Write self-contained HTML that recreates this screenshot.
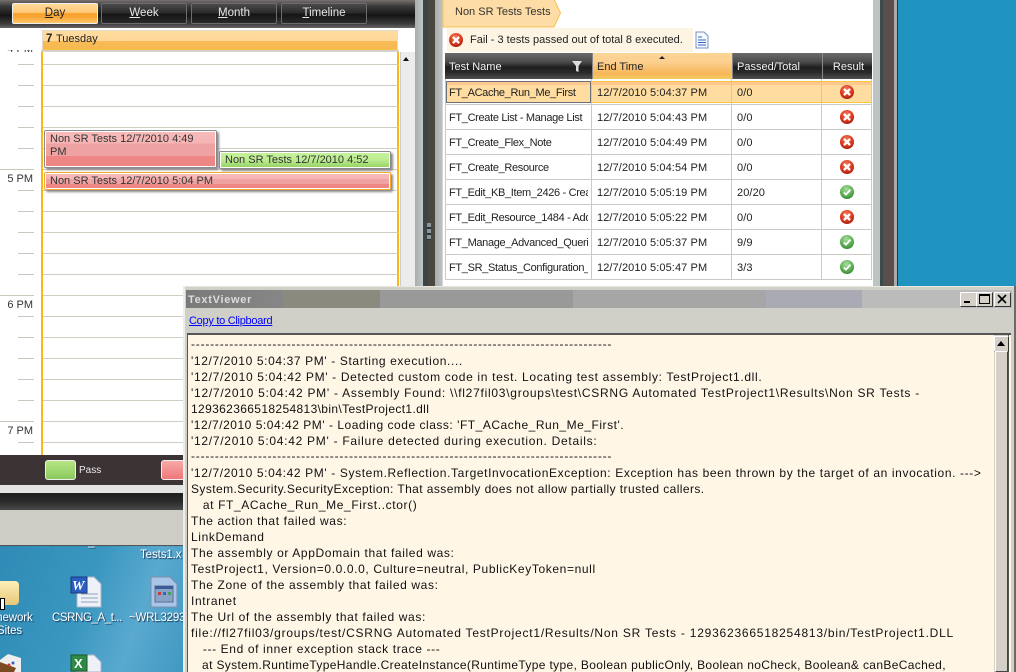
<!DOCTYPE html>
<html><head><meta charset="utf-8"><style>
html,body{margin:0;padding:0;background:#fff}
#p{position:relative;width:1016px;height:672px;overflow:hidden;font-family:"Liberation Sans",sans-serif;font-size:11px;color:#111;background:#2094c0}
.a{position:absolute}
.t{position:absolute;white-space:nowrap}
.btn{position:absolute;top:3px;height:19px;width:84px;border:1px solid #6d6d6d;border-radius:2px;color:#e8e8e8;text-align:center;line-height:19px;background:linear-gradient(#4a4a4a,#2c2c2c 45%,#151515 55%,#2a2a2a);font-size:11.5px}
.tick{position:absolute;left:18px;width:16px;height:1px;background:#c8c6bd}
.ln{position:absolute;left:43px;width:355px;height:1px;background:#cfcdc4}
.hl{position:absolute;left:0;width:34px;height:1px;background:#c8c6bd}
.hr{position:absolute;left:0;width:33px;text-align:right;font-size:11px;color:#333}
.ev{position:absolute;border:1px solid #8a8a8a;border-radius:2px;box-shadow:2px 2px 2px #888;font-size:11px;line-height:13px;padding:2px 0 0 5px;box-sizing:border-box;color:#333}
.red{background:linear-gradient(#f8baba 0,#f6b5b5 35%,#eea2a2 35%,#eea2a2 70%,#ee8686 70%);outline:1px solid #fff;outline-offset:-2px}
.th{position:absolute;top:53px;height:26px;background:linear-gradient(#6a6a6a,#4a4a4a 35%,#1e1e1e 55%,#2a2a2a 75%,#4e4e4e);color:#f2f2f2;font-size:11px;line-height:28px;padding-left:4px;box-sizing:border-box;border-left:1px solid #888}
.rl{position:absolute;left:446px;width:426px;height:1px;background:#c9c9c6}
.vl{position:absolute;top:79px;height:201px;width:1px;background:#c9c9c6}
.c{position:absolute;white-space:nowrap;overflow:hidden;font-size:11px;height:16px;line-height:16px;color:#222;letter-spacing:.1px}
.n{letter-spacing:-.33px}
.txt{position:absolute;left:191px;white-space:nowrap;font-size:12px;line-height:16px;height:16px;color:#111;letter-spacing:.62px}
.wb{position:absolute;top:292px;width:15px;height:13px;background:#d4d0c8;border:1px solid;border-color:#fff #333 #333 #fff}
.d{position:absolute;color:#fff;font-size:11.5px;letter-spacing:-.1px;text-shadow:1px 1px 1px #135;white-space:nowrap}
</style></head><body><div id="p">

<svg width="0" height="0" style="position:absolute"><defs>
<radialGradient id="rg" cx=".45" cy=".3" r=".8"><stop offset="0" stop-color="#f47a5a"/><stop offset=".6" stop-color="#d8341a"/><stop offset="1" stop-color="#8e1a10"/></radialGradient>
<radialGradient id="gg" cx=".45" cy=".3" r=".8"><stop offset="0" stop-color="#a8dca0"/><stop offset=".6" stop-color="#5aac50"/><stop offset="1" stop-color="#2d7a2d"/></radialGradient>
<g id="xi"><circle cx="7" cy="7" r="7" fill="url(#rg)"/><path d="M4.6 4.6L9.4 9.4M9.4 4.6L4.6 9.4" stroke="#fff" stroke-width="2.4" stroke-linecap="round"/></g>
<g id="ok"><circle cx="7" cy="7" r="7" fill="url(#gg)"/><path d="M3.8 7.5L6 9.6L10.4 4.6" stroke="#fff" stroke-width="1.8" fill="none"/></g>
</defs></svg>

<!-- desktop -->
<div class="a" style="left:0;top:545px;width:190px;height:127px;background:linear-gradient(110deg,#2f8bb5,#3a97c0 45%,#5aa9cf 70%,#3d97c0)"></div>

<!-- left app -->
<div class="a" style="left:0;top:0;width:415px;height:455px;background:#fff"></div>
<div class="a" style="left:0;top:0;width:415px;height:28px;background:linear-gradient(#77706f,#3a3a3a 22%,#141414 55%,#3c3c3c 85%,#666)"></div>
<div class="a" style="left:415px;top:0;width:8px;height:290px;background:linear-gradient(90deg,#a8acac,#c0c6c6)"></div>
<div class="btn" style="left:12px;color:#222;border-color:#eee;background:linear-gradient(#ffd898,#ffc878 45%,#f8a028 50%,#f8a838 70%,#ffc868)"><u>D</u>ay</div>
<div class="btn" style="left:101px"><u>W</u>eek</div>
<div class="btn" style="left:191px"><u>M</u>onth</div>
<div class="btn" style="left:281px"><u>T</u>imeline</div>

<div class="a" style="left:42px;top:30px;width:356px;height:20px;background:linear-gradient(#ffdca0,#ffd898 55%,#f8bc58 55%,#f8b850);border:1px solid #e0ddd0;box-sizing:border-box;border-bottom:1px solid #f8c040"></div>
<div class="a" style="left:41px;top:50px;width:358px;height:2px;background:#d4d2ca"></div>
<div class="t" style="left:46px;top:33px;font-size:11.5px;color:#222;font-weight:bold">7</div>
<div class="t" style="left:56px;top:33px;font-size:11px;color:#222">Tuesday</div>

<div class="a" style="left:41px;top:52px;width:2px;height:403px;background:#f8b818"></div>
<div class="a" style="left:397px;top:52px;width:2px;height:403px;background:#f8b818"></div>
<!-- lines -->
<div class="ln" style="top:64px"></div><div class="ln" style="top:85px"></div><div class="ln" style="top:106px"></div><div class="ln" style="top:127px"></div><div class="ln" style="top:148px"></div><div class="ln" style="top:169px"></div><div class="ln" style="top:190px"></div><div class="ln" style="top:211px"></div><div class="ln" style="top:232px"></div><div class="ln" style="top:253px"></div><div class="ln" style="top:274px"></div><div class="ln" style="top:295px"></div><div class="ln" style="top:316px"></div><div class="ln" style="top:337px"></div><div class="ln" style="top:358px"></div><div class="ln" style="top:379px"></div><div class="ln" style="top:400px"></div><div class="ln" style="top:421px"></div><div class="ln" style="top:442px"></div>
<div class="tick" style="top:64px"></div><div class="tick" style="top:85px"></div><div class="tick" style="top:106px"></div><div class="tick" style="top:127px"></div><div class="tick" style="top:148px"></div><div class="hl" style="top:169px"></div><div class="tick" style="top:190px"></div><div class="tick" style="top:211px"></div><div class="tick" style="top:232px"></div><div class="tick" style="top:253px"></div><div class="tick" style="top:274px"></div><div class="hl" style="top:295px"></div><div class="tick" style="top:316px"></div><div class="tick" style="top:337px"></div><div class="tick" style="top:358px"></div><div class="tick" style="top:379px"></div><div class="tick" style="top:400px"></div><div class="hl" style="top:421px"></div><div class="tick" style="top:442px"></div>
<div class="hr" style="top:173px">5 PM</div>
<div class="hr" style="top:299px">6 PM</div>
<div class="hr" style="top:425px">7 PM</div>
<div class="a" style="left:0;top:50px;width:34px;height:6px;overflow:hidden"><div class="t" style="right:1px;top:-7px;font-size:11px;color:#333">4 PM</div></div>

<div class="ev red" style="left:44px;top:130px;width:173px;height:38px">Non SR Tests 12/7/2010 4:49<br>PM</div>
<div class="ev" style="left:219px;top:151px;width:172px;height:18px;padding-left:5px;background:linear-gradient(#c6f49c,#bcec90 50%,#92d060);outline:1px solid #fff;outline-offset:-2px">Non SR Tests 12/7/2010 4:52</div>
<div class="ev red" style="left:44px;top:172px;width:347px;height:18px;border:2px solid #f4a830;padding:1px 0 0 4px">Non SR Tests 12/7/2010 5:04 PM</div>

<!-- scrollbar -->
<div class="a" style="left:400px;top:52px;width:15px;height:403px;background:#ececec;border-left:1px solid #ccc;box-sizing:border-box"></div>
<div class="a" style="left:403px;top:57px;width:0;height:0;border:3.5px solid transparent;border-bottom:4px solid #111;border-top:0"></div>

<!-- bottom bar -->
<div class="a" style="left:0;top:455px;width:190px;height:30px;background:#3c3335"></div>
<div class="a" style="left:45px;top:460px;width:31px;height:20px;border:1px solid #eee;border-radius:3px;box-sizing:border-box;background:linear-gradient(#b6e484,#a0d870 50%,#88c85c)"></div>
<div class="t" style="left:79px;top:465px;color:#e8e8e8;font-size:10px">Pass</div>
<div class="a" style="left:161px;top:460px;width:25px;height:20px;border:1px solid #eee;border-radius:3px;box-sizing:border-box;background:linear-gradient(#f8a8a8,#ee7878)"></div>
<div class="a" style="left:0;top:485px;width:190px;height:8px;background:#e4e4e2"></div>
<div class="a" style="left:0;top:493px;width:190px;height:17px;background:linear-gradient(#1f1f1f,#2a2a2a 50%,#4a4a4a)"></div>
<div class="a" style="left:0;top:510px;width:190px;height:35px;background:#cdccc5"></div>

<!-- desktop icons -->
<div class="a" style="left:0;top:581px;width:19px;height:24px;background:linear-gradient(#fdeeb8,#e8c878);border-radius:0 4px 4px 0"></div>
<div class="a" style="left:0;top:598px;width:3px;height:10px;background:#fff;border:1px solid #000"></div>
<svg class="a" style="left:70px;top:576px" width="32" height="32"><path d="M7 1H24L31 8V31H7Z" fill="#eef2f8" stroke="#a8b4c8"/><path d="M11 18H28M11 22H28M11 26H28" stroke="#8fa0bd"/><rect x="1" y="1" width="16" height="16" fill="#2a5fc0" stroke="#1a3a80"/><text x="2" y="14" font-family="Liberation Serif" font-weight="bold" font-style="italic" font-size="14" fill="#fff">W</text></svg>
<svg class="a" style="left:150px;top:576px" width="28" height="32"><path d="M1 1H20L27 8V31H1Z" fill="#a8c4e6" stroke="#7a90b0"/><rect x="5" y="10" width="18" height="16" fill="#8aa4c8" stroke="#5a7090"/><rect x="5" y="10" width="18" height="3" fill="#3a5a98"/><rect x="8" y="16" width="3" height="3" fill="#c04040"/><rect x="13" y="16" width="3" height="3" fill="#4060c0"/><rect x="18" y="16" width="3" height="3" fill="#40a060"/></svg>
<svg class="a" style="left:70px;top:654px" width="32" height="18"><path d="M7 1H24L31 8V18H7Z" fill="#eef2f8" stroke="#a8b4c8"/><rect x="1" y="1" width="16" height="16" fill="#2e8a44" stroke="#1a5a2a"/><text x="4" y="14" font-family="Liberation Sans" font-weight="bold" font-size="13" fill="#fff">X</text></svg>
<svg class="a" style="left:0;top:654px" width="22" height="18"><path d="M8 0L21 4V18H0V6Z" fill="#eee"/><path d="M0 8L16 14L14 18H0Z" fill="#7a4a20"/><circle cx="9" cy="11" r="1.5" fill="#d03030"/><circle cx="13" cy="9" r="1.5" fill="#3060c0"/></svg>
<div class="d" style="left:-7px;top:612px">mework</div>
<div class="d" style="left:-3px;top:625px">Sites</div>
<div class="d" style="left:52px;top:612px;letter-spacing:-.4px">CSRNG_A_t...</div>
<div class="d" style="left:129px;top:612px;letter-spacing:-.2px">~WRL3293</div>
<div class="d" style="left:140px;top:549px">Tests1.x</div>
<div class="a" style="left:0;top:545px;width:190px;height:4px;overflow:hidden"><div class="d" style="left:48px;top:-9px">browser_com...</div><div class="d" style="left:132px;top:-9px">~NRTesthe</div><div class="d" style="left:0;top:-9px">tech</div></div>
<div class="a" style="left:0;top:545px;width:190px;height:1px;background:#555"></div>

<!-- right app -->
<div class="a" style="left:423px;top:0;width:20px;height:290px;background:linear-gradient(90deg,#3a4545 0,#3a4545 5px,#4a483e 5px,#4a483e 12px,#a8acac 12px,#bcc0c0 19px,#eee 20px)"></div>
<div class="a" style="left:443px;top:0;width:430px;height:290px;background:#fff"></div>
<div class="a" style="left:873px;top:0;width:25px;height:290px;background:linear-gradient(90deg,#bcc4c4 0,#bcc4c4 7px,#3c4a4a 7px,#3c4a4a 10px,#5a4e4c 10px,#5a4e4c 21px,#aaa 21px,#aaa 24px,#333 24px)"></div>
<div class="a" style="left:898px;top:0;width:118px;height:290px;background:#2094c0"></div>
<div class="a" style="left:427px;top:223px;width:4px;height:17px;background:repeating-linear-gradient(#88959a 0,#88959a 4px,#333 4px,#333 6px)"></div>

<svg class="a" style="left:442px;top:0" width="119" height="28"><path d="M1 -1V27H112L118.500 13L112 -1Z" fill="#fddca6" stroke="#f8c050"/></svg>
<div class="t" style="left:455px;top:6px;color:#333">Non SR Tests Tests</div>
<div class="a" style="left:447px;top:28px;width:246px;height:24px;background:#fdf4e4"></div>
<svg class="a" style="left:449px;top:33px" width="15" height="15"><use href="#xi"/></svg>
<div class="t" style="left:470px;top:34px;color:#222">Fail - 3 tests passed out of total 8 executed.</div>
<svg class="a" style="left:695px;top:31px" width="14" height="18"><path d="M1 1H9L13 5V17H1Z" fill="#f4f8ff" stroke="#7a90b8"/><path d="M3 6H7M3 9H11M3 11.500H11M3 14H11" stroke="#3a64c0"/></svg>

<div class="th" style="left:445px;width:147px;border-left:0">Test Name</div>
<svg class="a" style="left:571px;top:60px" width="12" height="13"><path d="M1 1H11L7.500 6V12L5 11V6Z" fill="#ddd"/></svg>
<div class="th" style="left:592px;width:140px;color:#222;background:linear-gradient(#fcd494,#fcd090 35%,#f8c070 60%,#f8b858 80%,#f4cc60)">End Time</div>
<div class="a" style="left:659px;top:56px;width:0;height:0;border:3px solid transparent;border-bottom:3px solid #222;border-top:0"></div>
<div class="th" style="left:732px;width:90px">Passed/Total</div>
<div class="th" style="left:822px;width:50px;text-align:center;padding:0 0 0 2px">Result</div>

<div class="a" style="left:446px;top:81px;width:426px;height:22px;background:linear-gradient(#fcc890,#fcc890 3px,#ffdca0 3px);border:1px solid #fbc840;box-sizing:border-box"></div>
<div class="a" style="left:446px;top:81px;width:145px;height:22px;border:1px solid #6a7078;box-sizing:border-box"></div>

<div class="rl" style="top:104px"></div><div class="rl" style="top:129px"></div><div class="rl" style="top:154px"></div><div class="rl" style="top:179px"></div><div class="rl" style="top:204px"></div><div class="rl" style="top:229px"></div><div class="rl" style="top:254px"></div><div class="rl" style="top:279px"></div>
<div class="vl" style="left:445px"></div><div class="vl" style="left:591px"></div><div class="vl" style="left:731px"></div><div class="vl" style="left:821px"></div><div class="vl" style="left:871px"></div>

<div class="c n" style="left:449px;top:85px;width:140px">FT_ACache_Run_Me_First</div><div class="c" style="left:597px;top:85px">12/7/2010 5:04:37 PM</div><div class="c" style="left:737px;top:85px">0/0</div>
<div class="c n" style="left:449px;top:110px;width:140px">FT_Create List - Manage List</div><div class="c" style="left:597px;top:110px">12/7/2010 5:04:43 PM</div><div class="c" style="left:737px;top:110px">0/0</div>
<div class="c n" style="left:449px;top:135px;width:140px">FT_Create_Flex_Note</div><div class="c" style="left:597px;top:135px">12/7/2010 5:04:49 PM</div><div class="c" style="left:737px;top:135px">0/0</div>
<div class="c n" style="left:449px;top:160px;width:140px">FT_Create_Resource</div><div class="c" style="left:597px;top:160px">12/7/2010 5:04:54 PM</div><div class="c" style="left:737px;top:160px">0/0</div>
<div class="c n" style="left:449px;top:185px;width:139px">FT_Edit_KB_Item_2426 - Create</div><div class="c" style="left:597px;top:185px">12/7/2010 5:05:19 PM</div><div class="c" style="left:737px;top:185px">20/20</div>
<div class="c n" style="left:449px;top:210px;width:139px">FT_Edit_Resource_1484 - Add</div><div class="c" style="left:597px;top:210px">12/7/2010 5:05:22 PM</div><div class="c" style="left:737px;top:210px">0/0</div>
<div class="c n" style="left:449px;top:235px;width:139px">FT_Manage_Advanced_Queries</div><div class="c" style="left:597px;top:235px">12/7/2010 5:05:37 PM</div><div class="c" style="left:737px;top:235px">9/9</div>
<div class="c n" style="left:449px;top:260px;width:139px">FT_SR_Status_Configuration_</div><div class="c" style="left:597px;top:260px">12/7/2010 5:05:47 PM</div><div class="c" style="left:737px;top:260px">3/3</div>

<svg class="a" style="left:840px;top:85px" width="15" height="15"><use href="#xi"/></svg>
<svg class="a" style="left:840px;top:110px" width="15" height="15"><use href="#xi"/></svg>
<svg class="a" style="left:840px;top:135px" width="15" height="15"><use href="#xi"/></svg>
<svg class="a" style="left:840px;top:160px" width="15" height="15"><use href="#xi"/></svg>
<svg class="a" style="left:840px;top:185px" width="15" height="15"><use href="#ok"/></svg>
<svg class="a" style="left:840px;top:210px" width="15" height="15"><use href="#xi"/></svg>
<svg class="a" style="left:840px;top:235px" width="15" height="15"><use href="#ok"/></svg>
<svg class="a" style="left:840px;top:260px" width="15" height="15"><use href="#ok"/></svg>

<!-- TextViewer window -->
<div class="a" style="left:183px;top:286px;width:833px;height:386px;background:#d0cfc8;border-top:1px solid #e8e8e0;border-left:2px solid #eeeee8;box-sizing:border-box"></div>
<div class="a" style="left:1014px;top:286px;width:2px;height:386px;background:#6a6a66"></div>
<div class="a" style="left:186px;top:290px;width:97px;height:18px;background:linear-gradient(90deg,#7a7a7a,#868686)"></div>
<div class="a" style="left:283px;top:290px;width:97px;height:18px;background:#8a8a7e"></div>
<div class="a" style="left:380px;top:290px;width:193px;height:18px;background:#999"></div>
<div class="a" style="left:573px;top:290px;width:193px;height:18px;background:#a6a6a6"></div>
<div class="a" style="left:766px;top:290px;width:96px;height:18px;background:#aaaab4"></div>
<div class="a" style="left:862px;top:290px;width:150px;height:18px;background:#bbb"></div>
<div class="t" style="left:188px;top:294px;color:#ddd;font-weight:bold;font-size:11px;letter-spacing:.7px">TextViewer</div>
<div class="wb" style="left:960px"></div><div class="wb" style="left:976px"></div><div class="wb" style="left:994px"></div>
<div class="a" style="left:964px;top:301px;width:6px;height:2px;background:#000"></div>
<div class="a" style="left:979px;top:294px;width:9px;height:7px;border:1px solid #000;border-top-width:2px"></div>
<svg class="a" style="left:997px;top:294px" width="10" height="10"><path d="M1 1L9 9M9 1L1 9" stroke="#000" stroke-width="1.600"/></svg>
<div class="t" style="left:189px;top:315px;color:#00f;text-decoration:underline;font-size:11px;letter-spacing:-.28px">Copy to Clipboard</div>

<div class="a" style="left:187px;top:333px;width:824px;height:339px;background:#fff6e6;border-top:2px solid #555;border-left:1px solid #555;box-sizing:border-box"></div>
<div class="a" style="left:994px;top:335px;width:15px;height:337px;background:#d4d0c8;border-right:1px solid #555;box-sizing:border-box"></div>
<div class="wb" style="left:994px;top:336px;height:14px;width:13px"></div>
<div class="a" style="left:997px;top:341px;width:0;height:0;border:4px solid transparent;border-bottom:5px solid #000;border-top:0"></div>
<div class="a" style="left:995px;top:351px;width:13px;height:321px;background:#d4d0c8;border:1px solid;border-color:#fff #444 #444 #fff;box-sizing:border-box"></div>

<div class="txt" style="top:336px;letter-spacing:.79px">----------------------------------------------------------------------------------------</div>
<div class="txt" style="top:353px">'12/7/2010 5:04:37 PM' - Starting execution....</div>
<div class="txt" style="top:369px;letter-spacing:.66px">'12/7/2010 5:04:42 PM' - Detected custom code in test. Locating test assembly: TestProject1.dll.</div>
<div class="txt" style="top:385px;letter-spacing:.74px">'12/7/2010 5:04:42 PM' - Assembly Found: \\fl27fil03\groups\test\CSRNG Automated TestProject1\Results\Non SR Tests -</div>
<div class="txt" style="top:401px;letter-spacing:.36px">129362366518254813\bin\TestProject1.dll</div>
<div class="txt" style="top:417px;letter-spacing:.52px">'12/7/2010 5:04:42 PM' - Loading code class: 'FT_ACache_Run_Me_First'.</div>
<div class="txt" style="top:433px;letter-spacing:.72px">'12/7/2010 5:04:42 PM' - Failure detected during execution. Details:</div>
<div class="txt" style="top:448px;letter-spacing:.79px">----------------------------------------------------------------------------------------</div>
<div class="txt" style="top:465px">'12/7/2010 5:04:42 PM' - System.Reflection.TargetInvocationException: Exception has been thrown by the target of an invocation. ---&gt;</div>
<div class="txt" style="top:481px;letter-spacing:.42px">System.Security.SecurityException: That assembly does not allow partially trusted callers.</div>
<div class="txt" style="top:497px">&nbsp;&nbsp; at FT_ACache_Run_Me_First..ctor()</div>
<div class="txt" style="top:513px">The action that failed was:</div>
<div class="txt" style="top:529px">LinkDemand</div>
<div class="txt" style="top:545px">The assembly or AppDomain that failed was:</div>
<div class="txt" style="top:561px">TestProject1, Version=0.0.0.0, Culture=neutral, PublicKeyToken=null</div>
<div class="txt" style="top:577px">The Zone of the assembly that failed was:</div>
<div class="txt" style="top:593px">Intranet</div>
<div class="txt" style="top:609px">The Url of the assembly that failed was:</div>
<div class="txt" style="top:625px;letter-spacing:.77px">file://fl27fil03/groups/test/CSRNG Automated TestProject1/Results/Non SR Tests - 129362366518254813/bin/TestProject1.DLL</div>
<div class="txt" style="top:641px">&nbsp;&nbsp; --- End of inner exception stack trace ---</div>
<div class="txt" style="top:657px;letter-spacing:.35px">&nbsp;&nbsp; at System.RuntimeTypeHandle.CreateInstance(RuntimeType type, Boolean publicOnly, Boolean noCheck, Boolean&amp; canBeCached,</div>

</div></body></html>
